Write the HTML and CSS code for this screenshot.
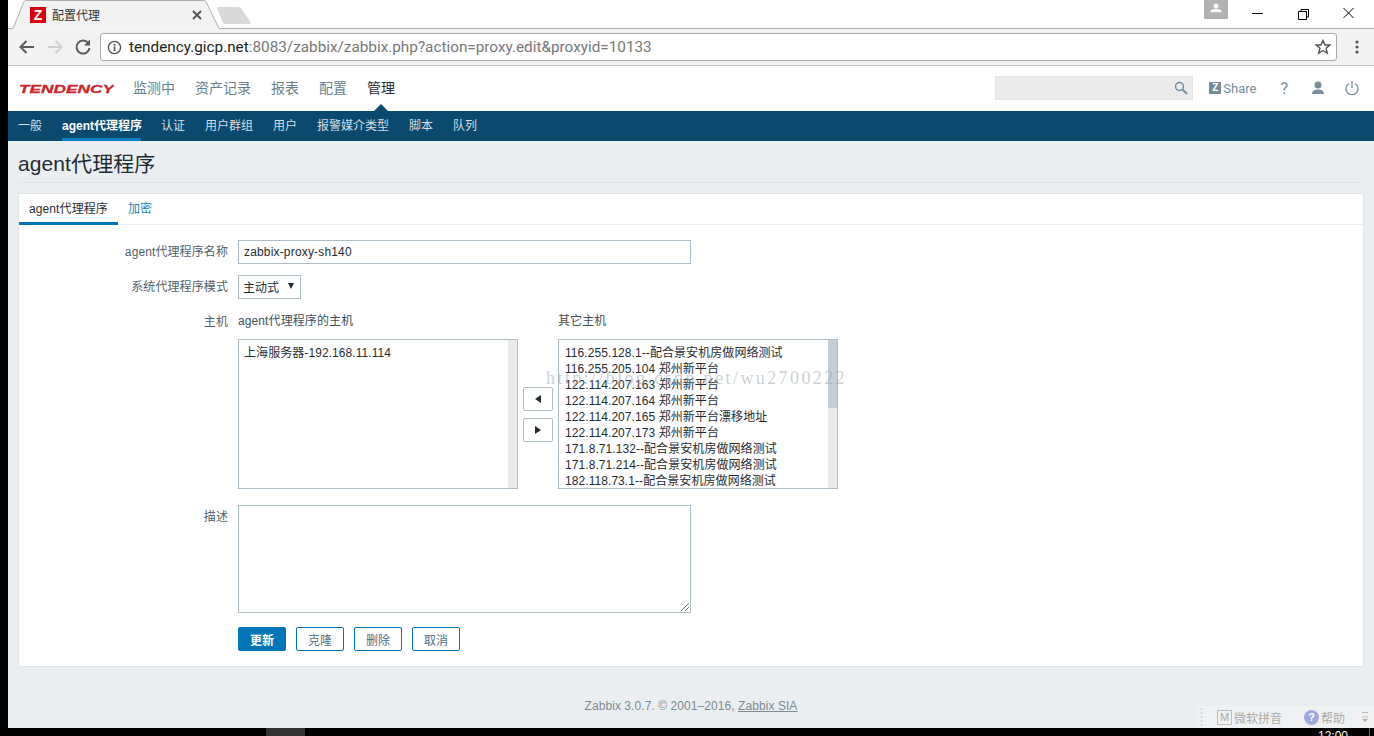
FILE: index.html
```html
<!DOCTYPE html>
<html lang="zh-CN">
<head>
    <meta charset="UTF-8">
    <title>配置代理</title>
    <link rel="stylesheet" href="styles.css">
</head>
<body>
    <div class="window">
        <div class="tabbar">
            <svg class="tab-shape" width="1366" height="29" viewBox="0 0 1366 29">
                <path d="M0 28.500H5L16 1.500Q17 .5 19 .5H195Q197 .5 198 1.500L211 28.500H1366" fill="#f2f2f2" stroke="#b0b0b0"/>
                <path d="M209 8Q209 7 211 7H230Q232 7 233 8L243 23Q243 24 241 24H218Q216 24 215 23Z" fill="#d8d8d8"/>
            </svg>
            <div class="tab">
                <span class="favicon">Z</span>
                <span class="tab-title">配置代理</span>
                <svg class="tab-close" width="10" height="10" viewBox="0 0 10 10"><path d="M1 1L9 9M9 1L1 9" stroke="#555" stroke-width="2"/></svg>
            </div>
            <div class="win-controls">
                <span class="avatar">
                    <svg width="12" height="10" viewBox="0 0 14 12"><circle cx="7" cy="3.500" r="3" fill="#fff"/><path d="M0 11Q1 7 7 7T14 11Z" fill="#fff"/></svg>
                </span>
                <svg class="win-btn" width="46" height="26" viewBox="0 0 46 26"><path d="M18 13.500H29" stroke="#000"/></svg>
                <svg class="win-btn" width="46" height="26" viewBox="0 0 46 26"><path d="M18.500 11.500H26.500V19.500H18.500ZM21 11V9.500H28.500V17H27" fill="none" stroke="#000"/></svg>
                <svg class="win-btn" width="46" height="26" viewBox="0 0 46 26"><path d="M17.500 8L27.500 18M27.500 8L17.500 18" stroke="#000"/></svg>
            </div>
        </div>

        <div class="toolbar">
            <svg width="18" height="16" viewBox="0 0 18 16"><path d="M16 8H3M8.500 2L2.500 8L8.500 14" fill="none" stroke="#5a5a5a" stroke-width="2"/></svg>
            <svg width="18" height="16" viewBox="0 0 18 16"><path d="M2 8H15M9.500 2L15.500 8L9.500 14" fill="none" stroke="#cfcfcf" stroke-width="2"/></svg>
            <svg width="18" height="18" viewBox="0 0 18 18"><path d="M14.500 5.500A6.500 6.500 0 1 0 15.500 10" fill="none" stroke="#5a5a5a" stroke-width="2"/><path d="M16 1.500V7.500H10Z" fill="#5a5a5a"/></svg>
            <div class="omnibox">
                <svg width="15" height="15" viewBox="0 0 16 16"><circle cx="8" cy="8" r="6.500" fill="none" stroke="#555" stroke-width="1.500"/><path d="M8 7V12M8 4V6" stroke="#555" stroke-width="1.800"/></svg>
                <span class="url"><span class="url-host">tendency.gicp.net</span>:8083/zabbix/zabbix.php?action=proxy.edit&amp;proxyid=10133</span>
                <svg class="star" width="16" height="16" viewBox="0 0 16 16"><path d="M8 1.500L10 6H14.800L11 9.200L12.300 14.300L8 11.500L3.700 14.300L5 9.200L1.200 6H6Z" fill="none" stroke="#555" stroke-width="1.400"/></svg>
            </div>
            <svg class="kebab" width="4" height="14" viewBox="0 0 4 14"><circle cx="2" cy="2" r="1.600" fill="#555"/><circle cx="2" cy="7" r="1.600" fill="#555"/><circle cx="2" cy="12" r="1.600" fill="#555"/></svg>
        </div>

        <div class="topnav">
            <svg class="logo" width="95" height="12" viewBox="0 0 95 12"><text x="0" y="10" textLength="95" lengthAdjust="spacingAndGlyphs" class="logo-text">TENDENCY</text></svg>
            <a class="topnav-item">监测中</a>
            <a class="topnav-item">资产记录</a>
            <a class="topnav-item">报表</a>
            <a class="topnav-item">配置</a>
            <a class="topnav-item current">管理</a>
            <div class="topnav-right">
                <div class="search">
                    <svg width="14" height="14" viewBox="0 0 14 14"><circle cx="5.500" cy="5.500" r="4" fill="none" stroke="#768d99" stroke-width="1.500"/><path d="M8.500 8.500L13 13" stroke="#768d99" stroke-width="2"/></svg>
                </div>
                <a class="share"><span class="share-z">Z</span>Share</a>
                <span class="help">?</span>
                <svg width="14" height="14" viewBox="0 0 14 14"><circle cx="7" cy="4" r="3.500" fill="#768d99"/><path d="M1 13Q1 8.500 7 8.500T13 13Z" fill="#768d99"/></svg>
                <svg width="14" height="14" viewBox="0 0 14 14"><path d="M4 2.500A6 6 0 1 0 10 2.500" fill="none" stroke="#768d99" stroke-width="1.300"/><path d="M7 0V7" stroke="#768d99" stroke-width="1.300"/></svg>
            </div>
        </div>

        <div class="subnav">
            <a class="subnav-item">一般</a>
            <a class="subnav-item active">agent代理程序</a>
            <a class="subnav-item">认证</a>
            <a class="subnav-item">用户群组</a>
            <a class="subnav-item">用户</a>
            <a class="subnav-item">报警媒介类型</a>
            <a class="subnav-item">脚本</a>
            <a class="subnav-item">队列</a>
        </div>

        <div class="content">
            <h1 class="page-title">agent代理程序</h1>

            <div class="card">
                <div class="card-tabs">
                    <a class="card-tab active">agent代理程序</a>
                    <a class="card-tab">加密</a>
                </div>

                <div class="form">
                    <label class="form-label">agent代理程序名称</label>
                    <div class="input name-input">zabbix-proxy-sh140</div>

                    <label class="form-label">系统代理程序模式</label>
                    <div><div class="select">主动式<span class="caret"></span></div></div>

                    <label class="form-label">主机</label>
                    <div class="hosts">
                        <div class="hosts-col">
                            <div class="hosts-title">agent代理程序的主机</div>
                            <div class="listbox">
                                <div class="listbox-items assigned">
                                    <div>上海服务器-192.168.11.114</div>
                                </div>
                                <div class="scroll"></div>
                            </div>
                        </div>
                        <div class="move-btns">
                            <button class="move-btn"><span class="arrow-left"></span></button>
                            <button class="move-btn"><span class="arrow-right"></span></button>
                        </div>
                        <div class="hosts-col">
                            <div class="hosts-title">其它主机</div>
                            <div class="listbox">
                                <div class="listbox-items">
                                    <div>116.255.128.1--配合景安机房做网络测试</div>
                                    <div>116.255.205.104 郑州新平台</div>
                                    <div>122.114.207.163 郑州新平台</div>
                                    <div>122.114.207.164 郑州新平台</div>
                                    <div>122.114.207.165 郑州新平台漂移地址</div>
                                    <div>122.114.207.173 郑州新平台</div>
                                    <div>171.8.71.132--配合景安机房做网络测试</div>
                                    <div>171.8.71.214--配合景安机房做网络测试</div>
                                    <div>182.118.73.1--配合景安机房做网络测试</div>
                                </div>
                                <div class="scroll"><div class="scroll-thumb"></div></div>
                            </div>
                        </div>
                    </div>

                    <label class="form-label">描述</label>
                    <div class="textarea">
                        <svg class="grip" width="8" height="8" viewBox="0 0 8 8"><path d="M0 8L8 0M4 8L8 4" stroke="#777"/></svg>
                    </div>

                    <div></div>
                    <div class="actions">
                        <button class="btn primary">更新</button>
                        <button class="btn">克隆</button>
                        <button class="btn">删除</button>
                        <button class="btn">取消</button>
                    </div>
                </div>
            </div>

            <div class="footer">Zabbix 3.0.7. © 2001–2016, <a class="footer-link">Zabbix SIA</a></div>
        </div>

        <div class="watermark">http://blog.csdn.net/wu2700222</div>

        <div class="ime">
            <svg class="ime-grip" width="3" height="20" viewBox="0 0 3 20"><path d="M1.500 1V20" stroke="#d5d8da" stroke-width="2" stroke-dasharray="2 2"/></svg>
            <span class="ime-m">M</span><span>微软拼音</span>
            <span class="ime-help">?</span><span>帮助</span>
            <svg class="ime-menu" width="6" height="12" viewBox="0 0 6 12"><path d="M0 1.500H6M0 6H6" stroke="#bbb"/><path d="M0 8H6L3 11Z" fill="#aaa"/></svg>
        </div>
    </div>
    <div class="taskbar">
        <span class="task-item"></span>
        <span class="clock">12:00</span>
        <span class="task-edge"></span>
    </div>
</body>
</html>
```

FILE: styles.css
```css
* {
  margin: 0;
  padding: 0;
  box-sizing: border-box;
}

html, body {
  height: 736px;
  overflow: hidden;
}

body {
  background-color: black;
  font-family: "Liberation Sans", "Noto Sans CJK SC", sans-serif;
  font-size: 12px;
  color: #1f2c33;
}

.window {
  position: relative;
  margin-left: 8px;
  height: 728px;
  display: flex;
  flex-direction: column;
  background-color: #ebeef0;
}

/* browser chrome */
.tabbar {
  position: relative;
  height: 29px;
  background-color: white;
  display: flex;
  justify-content: space-between;
  flex-shrink: 0;
}

.tab-shape {
  position: absolute;
  left: 0;
  top: 0;
}

.tab {
  position: relative;
  display: flex;
  align-items: center;
  height: 29px;
  padding-left: 22px;
  width: 194px;
}

.favicon {
  width: 16px;
  height: 16px;
  background-color: #d9000d;
  color: white;
  font-weight: bold;
  font-size: 14px;
  line-height: 16px;
  text-align: center;
}

.tab-title {
  margin-left: 6px;
  font-size: 12px;
  color: #333;
}

.tab-close {
  margin-left: auto;
}

.win-controls {
  display: flex;
  align-items: flex-start;
  position: relative;
  padding-right: 2px;
}

.avatar {
  width: 24px;
  height: 19px;
  background-color: #b2b2b2;
  display: flex;
  justify-content: center;
  padding-top: 3px;
  margin-right: 6px;
}

.win-btn {
  display: block;
}

.toolbar {
  height: 37px;
  background-color: #f2f2f2;
  border-bottom: 1px solid #c3c3c3;
  display: flex;
  align-items: center;
  gap: 10px;
  padding: 0 15px 0 10px;
  flex-shrink: 0;
}

.omnibox {
  flex: 1;
  height: 28px;
  margin-left: -2px;
  margin-right: 8px;
  background-color: white;
  border: 1px solid #a9a9a9;
  border-radius: 3px;
  display: flex;
  align-items: center;
  padding: 0 5px 0 6px;
  gap: 7px;
}

.url {
  font-family: "Roboto", "Liberation Sans", sans-serif;
  font-size: 15.3px;
  color: #777;
}

.url-host {
  color: #222;
}

.star {
  margin-left: auto;
}

/* zabbix nav */
.topnav {
  height: 45px;
  background-color: white;
  display: flex;
  align-items: center;
  padding: 0 15px 1px 11px;
  flex-shrink: 0;
}

.logo {
  margin-right: 19px;
  margin-top: 2px;
}

.logo-text {
  font-family: "Liberation Sans", sans-serif;
  font-size: 11.500px;
  font-weight: bold;
  font-style: italic;
  fill: #c8282c;
  stroke: #c8282c;
  stroke-width: 0.3px;
}

.topnav-item {
  font-size: 14px;
  line-height: 16px;
  color: #6b7f8a;
  margin-right: 20px;
}

.topnav-item.current {
  position: relative;
  color: #1f2c33;
}

.topnav-item.current::after {
  content: "";
  position: absolute;
  left: 7px;
  top: 16px;
  margin-top: 8px;
  border-left: 7px solid transparent;
  border-right: 7px solid transparent;
  border-bottom: 7px solid #0b4a6e;
}

.topnav-right {
  margin-left: auto;
  display: flex;
  align-items: center;
  gap: 20px;
}

.search {
  width: 198px;
  height: 24px;
  background-color: #ebebeb;
  border: 1px solid #e4e4e4;
  display: flex;
  justify-content: flex-end;
  align-items: center;
  padding-right: 4px;
  margin-right: -4px;
}

.share {
  display: flex;
  align-items: center;
  color: #768d99;
  font-family: "Roboto", "Liberation Sans", sans-serif;
  font-size: 13px;
  margin-right: 4px;
}

.share-z {
  width: 12px;
  height: 12px;
  background-color: #768d99;
  color: white;
  font-weight: bold;
  font-size: 10px;
  line-height: 12px;
  text-align: center;
  margin-right: 2px;
}

.help {
  color: #768d99;
  font-size: 16px;
  font-family: "Roboto", sans-serif;
  margin-right: 3px;
}

.subnav {
  height: 30px;
  background-color: #0b4a6e;
  display: flex;
  padding-left: 10px;
  gap: 20px;
  flex-shrink: 0;
}

.subnav-item {
  height: 30px;
  color: #d4dee4;
  line-height: 31px;
  font-size: 12px;
}

.subnav-item.active {
  width: 79px;
  white-space: nowrap;
  color: white;
  font-weight: bold;
  border-bottom: 3px solid #0f7fc4;
}

.content {
  flex: 1;
  padding: 0 10px;
  display: flex;
  flex-direction: column;
  min-height: 0;
}

.page-title {
  font-size: 21px;
  font-weight: normal;
  letter-spacing: 0.1px;
  line-height: 46px;
  height: 42px;
  color: #1f2c33;
  border-bottom: 1px solid #dfe4e7;
  margin-bottom: 10px;
}

.card {
  height: 474px;
  background-color: white;
  border: 1px solid #dfe4e7;
}

.card-tabs {
  display: flex;
  height: 31px;
  border-bottom: 1px solid #ebeef0;
}

.card-tab {
  padding: 0 10px;
  line-height: 30px;
  color: #1f7fc0;
  letter-spacing: 0.1px;
}

.card-tab.active {
  color: #1f2c33;
  height: 31px;
  border-bottom: 3px solid #0275b8;
}

.form {
  display: grid;
  grid-template-columns: 209px 1fr;
  column-gap: 10px;
  row-gap: 11px;
  padding-top: 15px;
  align-items: start;
}

.form-label {
  text-align: right;
  line-height: 24px;
  color: #4f5f68;
  letter-spacing: 0.1px;
}

.input {
  height: 24px;
  border: 1px solid #acbbc4;
  line-height: 23px;
  padding-left: 5px;
  letter-spacing: 0.17px;
}

.name-input {
  width: 453px;
}

.select {
  position: relative;
  width: 63px;
  height: 24px;
  border: 1px solid #acbbc4;
  line-height: 24px;
  padding-left: 4px;
}

.caret {
  position: absolute;
  right: 6px;
  top: 7px;
  border-left: 3.500px solid transparent;
  border-right: 3.500px solid transparent;
  border-top: 6px solid #1f2c33;
}

.hosts {
  display: flex;
  align-items: flex-end;
  margin-top: 3px;
}

.hosts-title {
  line-height: 17px;
  margin-bottom: 9px;
  color: #3f4f58;
  letter-spacing: 0.1px;
}

.listbox {
  width: 280px;
  height: 150px;
  border: 1px solid #acbbc4;
  position: relative;
  overflow: hidden;
}

.listbox-items {
  padding: 5px 0 0 6px;
  line-height: 16px;
  letter-spacing: 0.07px;
}

.listbox-items.assigned {
  padding-left: 5px;
}

.scroll {
  position: absolute;
  right: 0;
  top: 0;
  bottom: 0;
  width: 9px;
  background-color: #ebebeb;
}

.scroll-thumb {
  height: 68px;
  background-color: #c3ced5;
}

.move-btns {
  width: 40px;
  height: 150px;
  display: flex;
  flex-direction: column;
  align-items: center;
  justify-content: center;
  gap: 7px;
}

.move-btn {
  width: 30px;
  height: 24px;
  background-color: white;
  border: 1px solid #acbbc4;
  border-radius: 2px;
  display: flex;
  align-items: center;
  justify-content: center;
}

.arrow-left {
  border-top: 4px solid transparent;
  border-bottom: 4px solid transparent;
  border-right: 6px solid #1f2c33;
}

.arrow-right {
  border-top: 4px solid transparent;
  border-bottom: 4px solid transparent;
  border-left: 6px solid #1f2c33;
}

.textarea {
  position: relative;
  width: 453px;
  height: 108px;
  margin-top: 5px;
  border: 1px solid #acbbc4;
}

.form-label:nth-last-of-type(1) {
  margin-top: 5px;
}

.grip {
  position: absolute;
  right: 1px;
  bottom: 1px;
}

.actions {
  display: flex;
  gap: 10px;
  margin-top: 3px;
}

.btn {
  width: 48px;
  height: 24px;
  background-color: white;
  border: 1px solid #0275b8;
  border-radius: 2px;
  font-family: inherit;
  font-size: 12px;
  color: #4f6f84;
}

.btn.primary {
  background-color: #0275b8;
  color: white;
  font-weight: bold;
}

.footer {
  margin-top: 32px;
  text-align: center;
  color: #7b8a93;
  font-size: 12px;
  letter-spacing: 0.07px;
}

.footer-link {
  text-decoration: underline;
}

/* things lying over the page */
.watermark {
  position: absolute;
  left: 538px;
  top: 368px;
  font-family: "Liberation Serif", serif;
  font-size: 18px;
  letter-spacing: 2.400px;
  color: rgba(150, 160, 170, 0.5);
  white-space: nowrap;
}

.ime {
  position: absolute;
  right: 0;
  bottom: 0;
  width: 178px;
  height: 22px;
  background-color: #eff1f2;
  display: flex;
  align-items: center;
  padding-left: 4px;
  color: #aaa;
  font-size: 12px;
}

.ime-grip {
  margin-right: 14px;
}

.ime-m {
  width: 15px;
  height: 15px;
  border: 1px solid #bbb;
  font-size: 11px;
  line-height: 13px;
  text-align: center;
  margin-right: 2px;
}

.ime-help {
  width: 15px;
  height: 15px;
  border-radius: 50%;
  background-color: #9fa8dc;
  color: white;
  font-size: 11px;
  font-weight: bold;
  line-height: 15px;
  text-align: center;
  margin-left: 22px;
  margin-right: 2px;
}

.ime-menu {
  margin-left: 17px;
}

.taskbar {
  height: 8px;
  background-color: black;
  padding-left: 266px;
  display: flex;
  overflow: hidden;
}

.task-item {
  display: block;
  width: 39px;
  height: 8px;
  background-color: #333;
}

.clock {
  margin-left: 1013px;
  width: 40px;
  font-size: 12px;
  line-height: 16px;
  color: white;
}

.task-edge {
  width: 1px;
  height: 8px;
  margin-left: 11px;
  background-color: #666;
}
```
